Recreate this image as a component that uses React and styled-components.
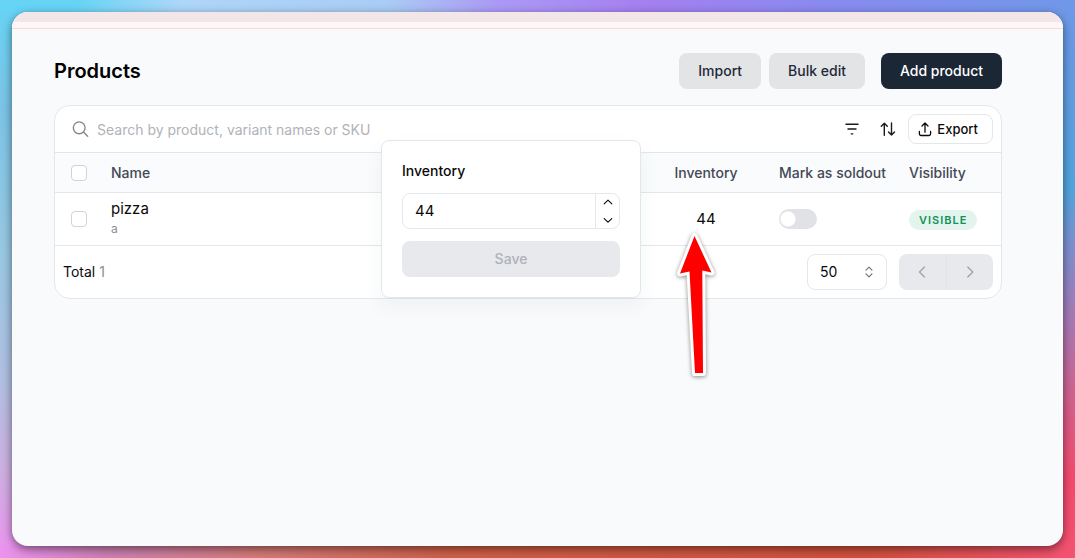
import styled, { createGlobalStyle } from "styled-components";

const GlobalStyle = createGlobalStyle`
  * {
    box-sizing: border-box;
  }
  body {
    margin: 0;
    font-family: Inter, "Liberation Sans", sans-serif;
    font-size: 14px;
    line-height: 20px;
    color: #0a0a0a;
  }
  button,
  input,
  select {
    font: inherit;
    color: inherit;
  }
`;

const Backdrop = styled.div`
  display: flex;
  min-height: 100vh;
  padding: 12px;
  background:
    linear-gradient(90deg, #66d4f5, #66d4f5 7%, #aed6f8 17%, #a9ccf5 36%, #ab9af5 46%, #a57ff0 60%, #8a8af0 76%, #6f98e8) top / 100% 12px no-repeat,
    linear-gradient(90deg, #ec92f0, #cc80b4 10%, #d47a78 24%, #cf5f48 42%, #d0503c 80%, #f45270) bottom / 100% 12px no-repeat,
    linear-gradient(#66d4f5, #7cc4e6 20%, #98c8e2 45%, #b0bfe2 68%, #ccb0e0 84%, #ec92f0) left / 50% 100% no-repeat,
    linear-gradient(#6f98e8, #52a4de 34%, #7c90d0 44%, #a878b4 58%, #d4608c 72%, #f44a6c 86%, #f45270) right / 50% 100% no-repeat;
`;

const Window = styled.div`
  flex: 1;
  border-radius: 16px;
  overflow: hidden;
  background: #f9fafb;
  box-shadow: 0 3px 10px rgba(0, 0, 0, 0.5);
`;

const Banner = styled.div`
  height: 17px;
  border-top: 10px solid #f2e6e9;
  border-bottom: 1px solid #f5d9dc;
  background: #fff7f7;
`;

const Page = styled.main`
  padding: 24px 61px 24px 42px;
`;

const Header = styled.header`
  display: flex;
  align-items: center;
  gap: 8px;
  margin-bottom: 16px;
`;

const Title = styled.h1`
  flex: 1;
  margin: 0;
  font-size: 20px;
  line-height: 28px;
  font-weight: 600;
  color: #000;
`;

const Button = styled.button`
  height: 36px;
  padding: 0 19px;
  margin-left: ${({ $primary }) => ($primary ? "8px" : "0")};
  border: none;
  border-radius: 8px;
  font-weight: 500;
  color: ${({ $primary }) => ($primary ? "#fff" : "#1f2937")};
  background: ${({ $primary }) => ($primary ? "#1c2736" : "#e3e4e6")};
  cursor: pointer;
`;

const Card = styled.section`
  border: 1px solid #e4e7ea;
  border-radius: 16px;
  background: #fff;
`;

const Toolbar = styled.div`
  display: flex;
  align-items: center;
  gap: 4px;
  height: 46px;
  padding: 0 8px 0 16px;
`;

const Search = styled.label`
  flex: 1;
  display: flex;
  align-items: center;
  gap: 8px;
  color: #85888c;
`;

const SearchInput = styled.input`
  flex: 1;
  padding: 2px 0 0;
  border: none;
  outline: none;
  background: transparent;
  color: #0a0a0a;

  &::placeholder {
    color: #b0b3b8;
    opacity: 1;
  }
`;

const IconButton = styled.button`
  display: flex;
  align-items: center;
  justify-content: center;
  width: 32px;
  height: 32px;
  padding: 0;
  border: none;
  background: transparent;
  color: #1a1a1a;
  cursor: pointer;
`;

const ExportButton = styled.button`
  display: flex;
  align-items: center;
  gap: 4px;
  height: 30px;
  padding: 0 14px 0 8px;
  border: 1px solid #e4e7ea;
  border-radius: 8px;
  background: #fff;
  font-size: 13px;
  font-weight: 500;
  cursor: pointer;
`;

const Table = styled.table`
  width: 100%;
  table-layout: fixed;
  border-spacing: 0;
`;

const Th = styled.th`
  width: ${({ $width }) => $width || "auto"};
  height: 41px;
  padding: 0 8px;
  border-top: 1px solid #e4e7ea;
  border-bottom: 1px solid #e4e7ea;
  background: #f9fbfc;
  text-align: ${({ $align }) => $align || "left"};
  font-weight: 500;
  color: #434956;
`;

const Td = styled.td`
  position: relative;
  height: 53px;
  padding: 0 8px;
  border-bottom: 1px solid #e4e7ea;
  text-align: ${({ $align }) => $align || "left"};
`;

const Checkbox = styled.input`
  display: block;
  appearance: none;
  width: 16px;
  height: 16px;
  margin: 0 8px;
  border: 1px solid #d0d3d8;
  border-radius: 4px;
  background: #fff;
`;

const ProductName = styled.div`
  font-size: 15px;
`;

const VariantName = styled.div`
  font-size: 12px;
  color: #8b8e93;
`;

const Count = styled.span`
  font-size: 15px;
`;

const Switch = styled.input`
  display: block;
  appearance: none;
  width: 38px;
  height: 20px;
  margin: 0;
  border-radius: 10px;
  background: radial-gradient(circle at 9px 10px, #fff 7px, #e0e2e5 8px);
`;

const Badge = styled.span`
  display: inline-block;
  padding: 0 10px;
  border-radius: 10px;
  background: #e3f4ed;
  font-size: 11px;
  font-weight: 600;
  letter-spacing: 1px;
  color: #12925a;
`;

const Popover = styled.form`
  position: absolute;
  right: 100%;
  top: 50%;
  transform: translateY(-50%);
  z-index: 1;
  display: flex;
  flex-direction: column;
  gap: 12px;
  width: 260px;
  padding: 20px;
  border: 1px solid #e4e7ea;
  border-radius: 8px;
  background: #fff;
  box-shadow: 0 8px 20px rgba(30, 60, 70, 0.05);
  text-align: left;
`;

const Label = styled.label`
  font-weight: 500;
`;

const NumberField = styled.div`
  display: flex;
  height: 36px;
  border: 1px solid #e4e7ea;
  border-radius: 8px;
`;

const NumberInput = styled.input`
  flex: 1;
  min-width: 0;
  padding: 0 12px;
  border: none;
  outline: none;
  background: transparent;
  font-size: 15px;
`;

const Steppers = styled.div`
  display: flex;
  flex-direction: column;
  width: 24px;
  border-left: 1px solid #e4e7ea;
`;

const Stepper = styled.button`
  flex: 1;
  display: flex;
  align-items: center;
  justify-content: center;
  padding: 0;
  border: none;
  background: transparent;
`;

const SaveButton = styled.button`
  height: 36px;
  border: none;
  border-radius: 8px;
  background: #e8e9ec;
  font-weight: 500;
  color: #aeb2b9;
`;

const Pointer = styled.svg`
  position: absolute;
  left: 32px;
  top: 35px;
  z-index: 2;
  filter: drop-shadow(0 1px 2px rgba(0, 0, 0, 0.45));
  pointer-events: none;
`;

const Footer = styled.footer`
  display: flex;
  align-items: center;
  gap: 12px;
  padding: 8px;
`;

const Total = styled.div`
  flex: 1;

  span {
    color: #8b8e93;
  }
`;

const SelectBox = styled.div`
  display: grid;
  align-items: center;
  width: 80px;

  > * {
    grid-area: 1 / 1;
  }

  svg {
    justify-self: end;
    margin-right: 12px;
    color: #6d7075;
    pointer-events: none;
  }
`;

const Select = styled.select`
  appearance: none;
  height: 36px;
  padding: 0 12px;
  border: 1px solid #e4e7ea;
  border-radius: 8px;
  background: #fff;
`;

const Pager = styled.nav`
  display: flex;
  border-radius: 8px;
  overflow: hidden;
  background: #e8e9ec;
`;

const PageButton = styled.button`
  display: flex;
  align-items: center;
  justify-content: center;
  width: 47px;
  height: 36px;
  padding: 0;
  border: none;
  background: transparent;
  color: #a0a4aa;

  & + & {
    border-left: 1px solid #e1e3e6;
  }
`;

const Icon = ({ size = 16, stroke = 1.3, children }) => (
  <svg
    width={size}
    height={size}
    viewBox={`0 0 ${size} ${size}`}
    fill="none"
    stroke="currentColor"
    strokeWidth={stroke}
    strokeLinecap="round"
    strokeLinejoin="round"
    aria-hidden="true"
  >
    {children}
  </svg>
);

const InventoryPopover = () => (
  <Popover>
    <Label htmlFor="inventory">Inventory</Label>
    <NumberField>
      <NumberInput id="inventory" type="text" inputMode="numeric" defaultValue="44" />
      <Steppers>
        <Stepper type="button" aria-label="Increase">
          <Icon size={10} stroke={1.1}>
            <path d="M1.2 5.8 5 2.2l3.8 3.6" />
          </Icon>
        </Stepper>
        <Stepper type="button" aria-label="Decrease">
          <Icon size={10} stroke={1.1}>
            <path d="M1.2 3.6 5 7.2l3.8-3.6" />
          </Icon>
        </Stepper>
      </Steppers>
    </NumberField>
    <SaveButton type="submit" disabled>
      Save
    </SaveButton>
  </Popover>
);

const App = () => {
  return (
    <Backdrop>
      <GlobalStyle />
      <Window>
        <Banner />
        <Page>
          <Header>
            <Title>Products</Title>
            <Button>Import</Button>
            <Button>Bulk edit</Button>
            <Button $primary>Add product</Button>
          </Header>
          <Card>
            <Toolbar>
              <Search>
                <Icon size={18} stroke={1.4}>
                  <circle cx="8.2" cy="7.8" r="5.9" />
                  <path d="m12.4 12 4.3 4.3" />
                </Icon>
                <SearchInput
                  type="text"
                  aria-label="Search products"
                  placeholder="Search by product, variant names or SKU"
                />
              </Search>
              <IconButton aria-label="Filter">
                <Icon stroke={1.4}>
                  <path d="M2 3.3h12M4 8h8M7.3 12.9h1.4" />
                </Icon>
              </IconButton>
              <IconButton aria-label="Sort">
                <Icon stroke={1.4}>
                  <path d="M4.3 14.2V2.2M1.3 5.2l3-3 3 3M11.5 2v12M8.5 11l3 3 3-3" />
                </Icon>
              </IconButton>
              <ExportButton>
                <Icon stroke={1.3}>
                  <path d="M8 11.2V2.2M5 5l3-3 3 3M2.4 10.4v2.4A1.7 1.7 0 0 0 4.1 14.5h7.8a1.7 1.7 0 0 0 1.7-1.7v-2.4" />
                </Icon>
                Export
              </ExportButton>
            </Toolbar>
            <Table>
              <thead>
                <tr>
                  <Th $width="48px">
                    <Checkbox type="checkbox" aria-label="Select all" />
                  </Th>
                  <Th>Name</Th>
                  <Th $width="130px" $align="center">
                    Inventory
                  </Th>
                  <Th $width="130px">Mark as soldout</Th>
                  <Th $width="100px">Visibility</Th>
                </tr>
              </thead>
              <tbody>
                <tr>
                  <Td>
                    <Checkbox type="checkbox" aria-label="Select pizza" />
                  </Td>
                  <Td>
                    <ProductName>pizza</ProductName>
                    <VariantName>a</VariantName>
                  </Td>
                  <Td $align="center">
                    <Count>44</Count>
                    <InventoryPopover />
                    <Pointer width="44" height="154" viewBox="0 0 44 154" aria-hidden="true">
                      <path
                        d="M21.5 8 38.5 44.5 29.3 42.5 30 145H22L16.5 43.5 7 45.5Z"
                        fill="#f00"
                        stroke="#fff"
                        strokeWidth="6"
                        strokeLinejoin="round"
                        paintOrder="stroke"
                      />
                    </Pointer>
                  </Td>
                  <Td>
                    <Switch type="checkbox" role="switch" aria-label="Mark as soldout" />
                  </Td>
                  <Td>
                    <Badge>VISIBLE</Badge>
                  </Td>
                </tr>
              </tbody>
            </Table>
            <Footer>
              <Total>
                Total <span>1</span>
              </Total>
              <SelectBox>
                <Select aria-label="Rows per page" defaultValue="50">
                  <option>50</option>
                  <option>100</option>
                </Select>
                <Icon size={12} stroke={1.1}>
                  <path d="M3 4.2 6 1.2l3 3M3 7.8l3 3 3-3" />
                </Icon>
              </SelectBox>
              <Pager aria-label="Pagination">
                <PageButton aria-label="Previous page" disabled>
                  <Icon stroke={1.4}>
                    <path d="M9.5 3 4.5 8l5 5" />
                  </Icon>
                </PageButton>
                <PageButton aria-label="Next page" disabled>
                  <Icon stroke={1.4}>
                    <path d="m5.8 3 5 5-5 5" />
                  </Icon>
                </PageButton>
              </Pager>
            </Footer>
          </Card>
        </Page>
      </Window>
    </Backdrop>
  );
};

export default App;
